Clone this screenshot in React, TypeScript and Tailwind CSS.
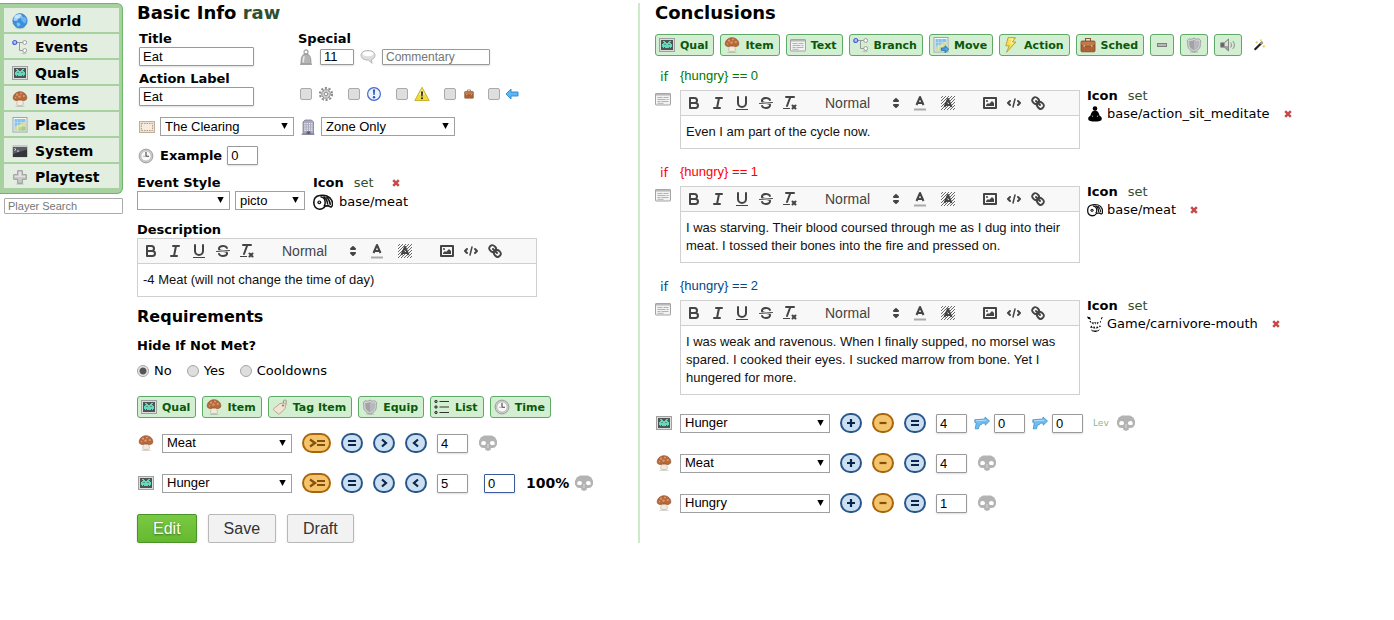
import React, { useId } from 'react';

type Kids = { children?: React.ReactNode };

const Svg = ({ children }: Kids) => (
  <svg className="size-4 shrink-0" viewBox="0 0 16 16" aria-hidden="true">{children}</svg>
);

/* ---------- pictograms ---------- */

const World = () => (
  <Svg>
    <ellipse cx="8" cy="14.8" rx="5" ry="1" fill="#000" opacity=".15" />
    <circle cx="8" cy="7.8" r="7.2" fill="#3d8fdc" stroke="#2f74c0" strokeWidth=".6" />
    <path d="M2 4.5C4 1.5 7 .8 9 1.2c1 .6-.6 1.6-1.2 2.6S6 5.6 5.600 7 3.500 7.500 2.600 8 1.200 6 2 4.500z" fill="#9fd4fa" />
    <path d="M10 4.200c2-.6 3.800-.2 4.400 1.600.5 2-.4 3.500-1.600 4.500-1.300.2-1.500-1.500-2.800-2.200-1.200-1-.9-3 0-3.900z" fill="#6db5f0" />
    <path d="M5 9.500c1.500-.3 3 .6 3.400 2-.3 1.300-1.500 2-2.400 1.900C4.800 12.500 4.300 11 5 9.500z" fill="#7fc3f5" />
    <ellipse cx="6.500" cy="3.600" rx="4" ry="2" fill="#fff" opacity=".45" />
  </Svg>
);
const Tree = () => (
  <Svg>
    <path d="M5 3.500h6M7.500 3.500v8h3.500" fill="none" stroke="#9a9a9a" />
    <circle cx="2.800" cy="3.500" r="2" fill="#b4c2ff" stroke="#4a5fd8" strokeWidth="1.200" />
    <circle cx="12.700" cy="3.500" r="1.900" fill="#fff" stroke="#999" />
    <circle cx="12.700" cy="11.500" r="1.900" fill="#fff" stroke="#999" />
    <ellipse cx="12" cy="14.500" rx="3" ry=".7" fill="#000" opacity=".15" />
  </Svg>
);
const Invader = () => (
  <Svg>
    <rect x=".5" y="1.500" width="15" height="13" fill="#dcdcdc" stroke="#a0a0a0" />
    <rect x="2" y="3" width="12" height="10" fill="#4c5656" />
    <path
      fill="#62dcb8"
      fillRule="evenodd"
      d="M4 4h2v1h1v1h2V5h1V4h2v1h-1v1h1v1h1v3h-1v1h-1v-1h-1v1H6v-1H5v1H4v-1H3V7h1V6h1V5H4zM5.500 7v1h1V7zM9.500 7v1h1V7z"
    />
  </Svg>
);
const Mushroom = () => (
  <Svg>
    <ellipse cx="8" cy="15.200" rx="5" ry=".7" fill="#000" opacity=".16" />
    <path d="M5 8h6c-.3 2 .1 3.800.5 5.300-.6 1.800-6.400 1.900-7 0 .6-1.500.8-3.300.5-5.300z" fill="#f4eadb" stroke="#bfa98e" strokeWidth=".6" />
    <path d="M1.200 6.800C1.500 3 4.500.8 8 .8s6.600 2.200 6.800 6c0 2-1.800 2.900-3.300 2.700-2-.6-5-.6-7 0-1.500.2-3.300-.7-3.300-2.700z" fill="#b9683a" stroke="#8d4c26" strokeWidth=".7" />
    <g fill="#dc9c72"><circle cx="5" cy="3.700" r="1.100" /><circle cx="9" cy="2.500" r="1" /><circle cx="11.800" cy="5" r="1.100" /><circle cx="7.500" cy="5.600" r="1.200" /><circle cx="3.500" cy="6.800" r=".8" /></g>
  </Svg>
);
const MapBase = () => (
  <>
    <rect x="1" y=".5" width="14" height="14.500" fill="#f5f8fa" stroke="#9aa5ad" />
    <rect x="2.500" y="2" width="11" height="11.500" fill="#83c2ee" />
    <path d="M2.500 13.500v-3c2-.5 3-3 5-3 1.500 0 2.500-2.500 4.500-2.500h1.500v8.500z" fill="#d5dc95" />
    <path d="M7 13.500c0-2.500 1.500-4 3.500-4h3v4z" fill="#a5cf85" />
    <path d="M5.500 2v11.500M9 2v11.500M2.500 5.500h11M2.500 9h11" stroke="#fff" strokeWidth=".5" opacity=".6" />
  </>
);
const Places = () => <Svg><MapBase /></Svg>;
const Move = () => (
  <Svg><MapBase /><path d="M8.500 11h3.500V8.700l3.700 3.500L12 15.700v-2.300H8.500z" fill="#4aa6ec" stroke="#1d69b4" strokeWidth=".8" /></Svg>
);
const Terminal = () => (
  <Svg>
    <rect x=".4" y="2" width="15.200" height="12.500" rx=".5" fill="#c9c9c9" />
    <rect x=".9" y="4" width="14.200" height="10" fill="#34343a" />
    <path d="M1 4h14v2.500L1 11z" fill="#5c5c64" />
    <path d="M2.500 5.500l1.500 1-1.500 1M5 8h2" fill="none" stroke="#fff" strokeWidth=".8" />
  </Svg>
);
const Plus = () => (
  <Svg>
    <ellipse cx="8" cy="15" rx="4.500" ry=".7" fill="#000" opacity=".15" />
    <path d="M5.700 1.700h4.600v4h4v4.600h-4v4H5.700v-4h-4V5.700h4z" fill="#c9c9c9" stroke="#929292" strokeWidth=".9" />
    <path d="M6.700 2.700h2.600v4h4v1.300H2.700V6.700h4z" fill="#e2e2e2" />
  </Svg>
);
const Weight = () => (
  <Svg>
    <circle cx="8" cy="3" r="2" fill="none" stroke="#a8a8a8" strokeWidth="1.300" />
    <path d="M3 15c0-4 .3-7 1.700-8.700C6 4.700 10 4.700 11.300 6.300 12.700 8 13 11 13 15z" fill="#b5b5b7" stroke="#8b8b8d" strokeWidth=".8" />
    <path d="M5.300 13.500c0-3 .2-5 1-6.200" stroke="#e8e8e8" fill="none" strokeWidth="1.500" />
    <path d="M2 15.300h12" stroke="#999" />
  </Svg>
);
const Bubble = () => (
  <Svg>
    <path d="M8 1.500c4 0 7 1.800 7 4.700 0 2.400-1.600 3.800-3.700 4.500l.9 3.600-3.900-3.200C4 11.100 1 9.300 1 6.200 1 3.300 4 1.500 8 1.500z" fill="#dededf" stroke="#aaa" strokeWidth=".8" />
    <ellipse cx="8" cy="4.800" rx="5.300" ry="2.400" fill="#fff" />
  </Svg>
);
const Gear = () => (
  <Svg>
    <circle cx="8" cy="8" r="6" fill="none" stroke="#8e8e8e" strokeWidth="2.200" strokeDasharray="2.100 1.670" />
    <circle cx="8" cy="8" r="4.400" fill="#d6d6d6" stroke="#919191" strokeWidth=".9" />
    <path d="M8 4v8M4 8h8M5.200 5.200l5.600 5.600M10.800 5.200l-5.600 5.600" stroke="#a5a5a5" strokeWidth=".6" />
    <circle cx="8" cy="8" r="1.600" fill="#fff" stroke="#888" strokeWidth=".8" />
  </Svg>
);
const Alert = () => (
  <Svg>
    <circle cx="8" cy="8" r="6.400" fill="#edf4ff" stroke="#4168cf" strokeWidth="1.200" />
    <path d="M6.900 3.500h2.200L8.600 9H7.400z" fill="#2c53bd" /><circle cx="8" cy="11.200" r="1.200" fill="#2c53bd" />
  </Svg>
);
const Warn = () => (
  <Svg>
    <path d="M8 1.300l7.200 13.200H.8z" fill="#f0db3d" stroke="#c3ac22" strokeWidth=".9" strokeLinejoin="round" />
    <path d="M8 3l3 5.500C9 9.500 7 9.500 5 8.500z" fill="#f9ef8e" />
    <path d="M7 5.500h2l-.4 5H7.400z" fill="#222" /><circle cx="8" cy="12.300" r="1" fill="#222" />
  </Svg>
);
const Case = ({ small = false }: { small?: boolean }) => (
  <svg className={small ? 'size-2.5 shrink-0' : 'size-4 shrink-0'} viewBox="0 0 16 16" aria-hidden="true">
    <path d="M5.500 4V1.500h5V4" fill="none" stroke="#8d5a36" strokeWidth="1.100" />
    <rect x="1" y="4" width="14" height="10.800" rx="1" fill="#ad6335" stroke="#7d4522" strokeWidth=".8" />
    <path d="M1.500 4.800h13v3.200c-4 1.500-9 1.500-13 0z" fill="#c07a4c" />
    <path d="M1.500 8.300c4 1.500 9 1.500 13 0" fill="none" stroke="#7d4522" strokeWidth=".6" />
    <rect x="3.500" y="8" width="1.500" height="1.800" fill="#ddb377" /><rect x="11" y="8" width="1.500" height="1.800" fill="#ddb377" />
  </svg>
);
const LeftArrow = () => (
  <Svg><path d="M2 8l5-5v3h7v4H7v3z" fill="#5cb8f2" stroke="#2a84cf" strokeWidth=".9" strokeLinejoin="round" /></Svg>
);
const Ticket = () => (
  <Svg>
    <rect x=".5" y="2.500" width="15" height="11" fill="#efe2d0" stroke="#bfae99" />
    <rect x="2.500" y="4.500" width="11" height="7" fill="#f5ecdf" stroke="#a8967f" strokeWidth=".9" strokeDasharray="1.500 1" />
  </Svg>
);
const Building = () => (
  <Svg>
    <path d="M3 3l2-2h6.500l2 2v12H3z" fill="#a9a9bd" stroke="#7f7f93" strokeWidth=".8" />
    <path d="M4.900 4v8M7.200 4v8M9.500 4v8M11.800 4v8" stroke="#eeeefa" strokeWidth="1.200" strokeDasharray="1.300 .9" />
    <path d="M1.500 15.300h13M7 15v-2.500h3V15" stroke="#77778b" fill="#54546a" />
  </Svg>
);
const Clock = () => (
  <Svg>
    <circle cx="8" cy="8" r="6.900" fill="#d2d2d2" stroke="#959595" strokeWidth=".9" />
    <circle cx="8" cy="8" r="5.100" fill="#fafafa" stroke="#aaa" strokeWidth=".7" />
    <path d="M8 4v4.300h3" fill="none" stroke="#444" strokeWidth="1.100" />
    <path d="M5 8.300h2" stroke="#999" strokeWidth=".7" />
  </Svg>
);
const Meat = ({ large = false }: { large?: boolean }) => (
  <svg className={large ? 'size-5 shrink-0' : 'size-4 shrink-0'} viewBox="0 0 20 20" aria-hidden="true">
    <path d="M.8 10.500c0-4 2.200-6.500 5.700-7 5-1 10.500.5 12.300 5 .9 2.500.7 5.500-.3 6.200-1.200.6-2.200-.2-3.200-1l-3.200.4c-1.200 2-3.300 3.100-5.600 3.100C3 17.200.8 14.500.8 10.500z" fill="#fff" stroke="#111" strokeWidth="1.600" />
    <path d="M7.500 4.800c3.200.4 4.800 3 4.700 6-.1 1.500-.6 2.500-1.200 3.200" fill="none" stroke="#111" strokeWidth="1.500" />
    <circle cx="6.300" cy="10.300" r="1.900" fill="#111" /><circle cx="6.300" cy="10.300" r=".7" fill="#fff" />
    <path d="M10.500 4.500c2.700 1.500 3.900 4.500 4.200 8M13.500 4.800c2 1.800 3.400 4.500 3.900 8" fill="none" stroke="#111" strokeWidth="1.500" />
  </svg>
);
const Tag = () => (
  <Svg>
    <path d="M11.500 4.500C10.500 1.500 13 0 14 1.500s-1 3 .8 4" fill="none" stroke="#9a8574" strokeWidth="1" />
    <path d="M8 4.500l4.200-.4 1.300 1.200-.3 4.200-5.700 5.300c-.6.500-1 .4-1.500 0L1.700 11c-.5-.5-.4-1 0-1.400z" fill="#f1e4d5" stroke="#b59f8a" strokeWidth=".9" />
    <circle cx="11" cy="6.500" r="1.100" fill="#b8714f" />
  </Svg>
);
const Shield = () => (
  <Svg>
    <ellipse cx="8" cy="15" rx="4.500" ry=".7" fill="#000" opacity=".18" />
    <path d="M8 1c1.500 1 3.200 1.600 4.800.6l2 2.200c-1 1.500-.2 3-.5 5-.4 3-3 5-6.300 6.200C4.700 13.800 2.100 11.800 1.700 8.800c-.3-2 .5-3.500-.5-5l2-2.200C4.800 2.600 6.500 2 8 1z" fill="#d2d2d4" stroke="#939396" strokeWidth=".8" />
    <path d="M8 3c1.500.9 3 1.200 4.300.7l.6.8c-.5 1.500 0 2.500-.3 4.100-.3 2-2.100 3.700-4.600 4.700-2.500-1-4.300-2.700-4.600-4.700-.3-1.600.2-2.600-.3-4.100l.6-.8C5 4.200 6.500 3.900 8 3z" fill="#a2a3a7" />
    <path d="M8 3c1.500.9 3 1.200 4.300.7l.6.8c-.5 1.500 0 2.500-.3 4.100-.3 2-2.100 3.700-4.600 4.700z" fill="#b7b8bc" />
  </Svg>
);
const List = () => (
  <Svg>
    <path d="M5.500 2.500H15M5.500 8H15M5.500 13.500H15" stroke="#333" strokeWidth="1.100" />
    <g fill="#999" stroke="#222" strokeWidth=".9"><circle cx="2" cy="2.500" r="1.200" /><circle cx="2" cy="8" r="1.200" /><circle cx="2" cy="13.500" r="1.200" /></g>
  </Svg>
);
const TextDoc = () => (
  <Svg>
    <rect x=".5" y="2.500" width="15" height="11.500" rx=".5" fill="#f2f2f2" stroke="#a3a3a3" />
    <path d="M1 3.700h14" stroke="#b9b9b9" strokeWidth="1.700" />
    <path d="M2.500 6.500h5M8.500 6.500h5M2.500 8.500h8M11.500 8.500h2M2.500 10.500h3M6.500 10.500h7M2.500 12.300h6" stroke="#aaa" strokeWidth=".9" />
  </Svg>
);
const Bolt = () => (
  <Svg><path d="M5 .7h7.500L9.500 5H13L3.500 15.300l2.800-6.500H2.800z" fill="#f5df54" stroke="#ba9d28" strokeWidth=".9" strokeLinejoin="round" /><path d="M6 2h4L7.500 6H10" fill="none" stroke="#fff9b5" /></Svg>
);
const Minus = () => (
  <Svg><rect x="3.500" y="6.500" width="9" height="3" fill="#b7b7b7" stroke="#808080" /></Svg>
);
const Sound = () => (
  <Svg>
    <path d="M.8 5.800h3.500L8.500 2v12l-4.200-3.800H.8z" fill="#a2a2a2" stroke="#777" strokeWidth=".8" />
    <path d="M.8 6.200h3.500v3.600H.8z" fill="#666" />
    <path d="M4.800 6L8 3.200V9H4.800z" fill="#ddd" />
    <path d="M10.500 5.500c1.200 1.500 1.200 3.500 0 5M12.800 4c2 2.400 2 5.600 0 8" fill="none" stroke="#999" strokeWidth="1.100" />
  </Svg>
);
const Wand = () => (
  <svg className="size-3.5 shrink-0" viewBox="0 0 16 16" aria-hidden="true">
    <path d="M3 13.500l9-9" stroke="#222" strokeWidth="2.500" /><path d="M9.800 6.700l2.300-2.300" stroke="#aaa" strokeWidth="2" />
    <path d="M5.500 3.500v3M4 5h3M12 9.500h3M13.500 8v3M9 2.500h2M10 1.500v2" stroke="#e8c84b" strokeWidth="1" />
  </svg>
);
const Meditate = () => (
  <Svg><circle cx="8" cy="2.600" r="2.300" /><path d="M6.500 5h3c2 .3 2.200 2.500 3.300 5 1.500.6 2.300 1.500 1.900 3.500-.3 1.400-3 2-6.700 2s-6.400-.6-6.700-2c-.4-2 .4-2.900 1.900-3.500C4.300 7.500 4.500 5.300 6.500 5z" /><path d="M5.200 9.500l.6 1.500M10.800 9.500l-.6 1.500" stroke="#fff" strokeWidth=".6" /></Svg>
);
const Mouth = () => (
  <Svg>
    <path d="M0 .5l3 .8 1 2.400-3-1zM15.800 1.200l-1.300 2.300-.7-.6 1-1.900zM2.300 5.500l1.500-.8.400 2.200zM12.800 5l1.500.6-1.100 1.500zM4.500 6.500l2.200-.3-.4 2.500zM7.200 6.300l1.800-.1-.6 2.300zM9.600 6.200l2.100.1-1 2.300zM3 11.500l1.500-2 1.300 2.500zM6 12.300l1-2.400 1.500 2.600zM9 12.500l1-2.600 1.500 2.200zM12 11.300l.7-2 1.500 1.300zM4 13.300l1.700 1.200h5l2.300-1.500-1.500 2-3 .9-3.500-.7z" />
  </Svg>
);
const Gun = () => (
  <Svg><path d="M.8 4.800L11 4V2l4.500 4-4.300 4.200V8L8 8.300 7.200 9.800H5.500l-1 4H1.200L2.300 8 .8 7.300z" fill="#6fbdf1" stroke="#3a8fd0" strokeWidth=".8" strokeLinejoin="round" /><path d="M2 5.800l10-.6" stroke="#b5e0fb" /></Svg>
);
const Mask = () => (
  <svg className="h-4 w-[18px]" viewBox="0 0 18 16" aria-hidden="true">
    <path d="M5 .5h8l3.300 2L18 6v3.500l-2 3-2.500.5h-1.700v1.800L9 16l-2.800-1.200V13H4.500L2 12.500l-2-3V6l1.700-3.500z" fill="#b3b3b3" />
    <path d="M4.500 6C2.600 6.200 2 7.500 2.300 9.500c1.700 1 4.400.7 4.700-1C7.200 6.800 6 5.900 4.500 6zM13.500 6c1.900.2 2.500 1.500 2.200 3.500-1.700 1-4.400.7-4.700-1C10.800 6.800 12 5.900 13.500 6z" fill="#fff" />
    <path d="M9 9v4" stroke="#e5e5e5" strokeWidth=".8" />
  </svg>
);
const RedX = () => (
  <svg className="size-2" viewBox="0 0 8 8" aria-hidden="true"><path d="M1.200 1.200l5.600 5.600M6.800 1.200L1.200 6.800" stroke="#c8494c" strokeWidth="2.500" /></svg>
);

/* ---------- form parts ---------- */

const sans = "font-['Liberation_Sans',Arial,sans-serif]";
const plainField = "rounded-[1px] border bg-white pl-[3px] text-black shadow-[0_1px_2px_#ddd] font-['Liberation_Sans',Arial,sans-serif]";
const field = `${plainField} border-[#999] text-[13px]`;
const caption = 'pt-0.5 leading-4 font-bold';

const Num = ({ value, label, blue = false }: { value: string; label: string; blue?: boolean }) => (
  <input aria-label={label} defaultValue={value} className={`${plainField} h-[19px] w-[31px] text-[13px] ${blue ? 'border-[#3b5a9a]' : 'border-[#999]'}`} />
);

const Select = ({ value, label, width }: { value: string; label: string; width: string }) => (
  <span className={`relative inline-flex h-[19px] ${width}`}>
    <select aria-label={label} defaultValue={value} className={`h-full w-full appearance-none border border-[#a0a0a0] bg-white pl-1 text-[13px] leading-4 text-black ${sans}`}>
      <option>{value}</option>
    </select>
    <svg className="pointer-events-none absolute top-1.5 right-1.5 h-1.5 w-[7px]" viewBox="0 0 7 6" aria-hidden="true"><path d="M.3 0h6.400L3.500 6z" /></svg>
  </span>
);

const Chip = ({ icon, text, label }: { icon: React.ReactNode; text?: string; label?: string }) => (
  <button aria-label={label} className={`flex h-[22px] items-center gap-[5px] rounded-[3px] border border-[#5fa866] bg-[#d3efd1] text-[11px] font-bold text-[#0a580a] ${text ? 'pr-[5px] pl-[3px]' : 'px-[5px]'}`}>
    {icon}{text && <span className="pt-px">{text}</span>}
  </button>
);

const Op = ({ kind, on = false }: { kind: string; on?: boolean }) => {
  const paths: Record<string, string> = {
    '+': 'M3 7h8M7 3v8',
    '−': 'M3.500 7h7',
    '=': 'M3 5h8M3 9h8',
    '>': 'M5 3.500L9 7l-4 3.500',
    '<': 'M9 3.500L5 7l4 3.500',
  };
  return (
    <button aria-label={kind} className={`flex h-5 items-center justify-center rounded-full border-2 ${kind === '>=' ? 'w-[29px]' : 'w-[22px]'} ${on ? 'border-[#a9650b] bg-[#f3c46c] text-[#82500a]' : 'border-[#29568a] bg-[#cbdff1] text-[#08264d]'}`}>
      {kind === '>=' ? (
        <svg className="h-3.5 w-[18px] shrink-0" viewBox="0 0 18 14" aria-hidden="true"><path d="M2 3.500L7 7l-5 3.500M9 5h8M9 9h8" fill="none" stroke="currentColor" strokeWidth="2.200" /></svg>
      ) : (
        <svg className="size-3.5 shrink-0" viewBox="0 0 14 14" aria-hidden="true"><path d={paths[kind]} fill="none" stroke="currentColor" strokeWidth="2.200" /></svg>
      )}
    </button>
  );
};

/* ---------- rich text editor ---------- */

const Tool = ({ label, children }: Kids & { label: string }) => (
  <button aria-label={label} className="flex h-6 w-6 items-center justify-center">
    <svg className="size-[18px]" viewBox="0 0 18 18" fill="none" stroke="#444" strokeWidth="2" strokeLinecap="round" strokeLinejoin="round" aria-hidden="true">{children}</svg>
  </button>
);

const Editor = ({ children }: Kids) => {
  const hatch = useId();
  return (
    <div className="w-[400px] border border-[#d0d0d0] bg-white">
      <div className="flex h-[25px] items-center border-b border-[#d0d0d0] bg-[#f8f8f8] pl-px">
        <Tool label="Bold"><path d="M5 4h4.500a2.500 2.500 0 0 1 0 5H5zM5 9h5.500a2.500 2.500 0 0 1 0 5H5z" /></Tool>
        <Tool label="Italic"><path d="M7 4h6M5 14h6M8 14l2-10" /></Tool>
        <Tool label="Underline"><path d="M5 3v6a4 4 0 0 0 8 0V3" /><rect x="3" y="15" width="12" height="1" fill="#444" stroke="none" /></Tool>
        <Tool label="Strike">
          <path d="M15.500 8.500l-13 1" strokeWidth="1" />
          <g fill="#444" stroke="none">
            <path d="M9.007 8C6.542 7.791 6 7.519 6 6.500 6 5.792 7.283 5 9 5c1.571 0 2.765.679 2.969 1.309a1 1 0 0 0 1.900-.617C13.356 4.106 11.354 3 9 3 6.200 3 4 4.538 4 6.500a3.200 3.200 0 0 0 .5 1.843z" />
            <path d="M8.984 10C11.457 10.208 12 10.479 12 11.500c0 .708-1.283 1.500-3 1.500-1.571 0-2.765-.679-2.969-1.309a1 1 0 1 0-1.900.617C4.644 13.894 6.646 15 9 15c2.800 0 5-1.538 5-3.500a3.200 3.200 0 0 0-.5-1.843z" />
          </g>
        </Tool>
        <Tool label="Clear formatting"><path d="M5 3h8M6 12l3.350-9M11.500 11.500l3 3M14.500 11.500l-3 3" /><rect x="2" y="14" width="7" height="1" fill="#444" stroke="none" /></Tool>
        <span className="relative ml-[23px] flex h-6 w-[83px] items-center">
          <select aria-label="Text style" className={`h-full w-full appearance-none bg-transparent text-sm text-[#444] ${sans}`}><option>Normal</option></select>
          <svg className="pointer-events-none absolute top-[3px] right-[3px] size-[18px]" viewBox="0 0 18 18" fill="#444" stroke="#444" strokeWidth="2" strokeLinejoin="round" aria-hidden="true"><path d="M7 11l2 2 2-2zM7 7l2-2 2 2z" /></svg>
        </span>
        <Tool label="Text colour"><path d="M3 15.500h12" stroke="#aaa" strokeLinecap="butt" /><path d="M5.500 11L9 3l3.500 8M6.380 9h5.250" strokeLinecap="butt" /></Tool>
        <span className="w-1" />
        <Tool label="Background colour">
          <defs><pattern id={hatch} width="3" height="3" patternUnits="userSpaceOnUse"><path d="M-1 1l2-2M0 3l3-3M2 4l2-2" stroke="#444" strokeWidth=".8" /></pattern></defs>
          <rect x="2" y="2" width="14" height="14" fill={`url(#${hatch})`} stroke="none" />
          <path d="M5.500 13L9 5l3.500 8M6.380 11h5.250" strokeLinecap="butt" />
        </Tool>
        <span className="w-[18px]" />
        <Tool label="Image"><rect x="3" y="4" width="12" height="10" /><circle cx="6" cy="7" r="1" fill="#444" stroke="none" /><path d="M5 12v-1l2-2 1 1 3-3 2 2v3z" fill="#444" stroke="none" /></Tool>
        <Tool label="Code"><path d="M5 7L3 9l2 2M13 7l2 2-2 2" /><path d="M10 5L8 13" strokeWidth="1.500" /></Tool>
        <Tool label="Link"><path d="M7 7l4 4M8.900 4.577a3.476 3.476 0 0 1 .36 4.679A3.476 3.476 0 0 1 4.577 8.900C3.185 7.500 2.035 6.400 4.217 4.217S7.500 3.185 8.900 4.577zM13.423 9.100a3.476 3.476 0 0 0-4.679-.36 3.476 3.476 0 0 0 .36 4.679c1.392 1.392 2.500 2.542 4.679.36s1.032-3.279-.36-4.679z" /></Tool>
      </div>
      <div className={`px-[5px] py-[7px] text-[13px] leading-[18px] text-[#111] ${sans}`}>{children}</div>
    </div>
  );
};

const IconInfo = ({ icon, name }: { icon: React.ReactNode; name: string }) => (
  <div className="-mt-[3px] flex flex-col text-[13px] leading-[18px]">
    <p><b>Icon</b><a href="#set" className="ml-2.5 text-[#2f4f2f]">set</a></p>
    <p className="flex items-center gap-1">{icon}<span>{name}</span><button aria-label="Remove icon" className="ml-2.5"><RedX /></button></p>
  </div>
);

const Conclusion = ({ cond, color, icon, name, children }: Kids & { cond: string; color: string; icon: React.ReactNode; name: string }) => (
  <article className="mb-3.5">
    <p className={`mb-1 flex pl-[5px] text-[13px] leading-[18px] ${color}`}><span className="w-5 pt-px">if</span><span className={sans}>{cond}</span></p>
    <div className="flex items-start">
      <span className="mt-px mr-[9px]"><TextDoc /></span>
      <Editor>{children}</Editor>
      <div className="ml-[7px]"><IconInfo icon={icon} name={name} /></div>
    </div>
  </article>
);

const EffectRow = ({ icon, name, value, children }: Kids & { icon: React.ReactNode; name: string; value: string }) => (
  <div className="flex h-5 items-center">
    {icon}<span className="ml-2 flex"><Select value={name} label="Effect target" width="w-[150px]" /></span>
    <div className="mx-2.5 flex gap-2.5"><Op kind="+" /><Op kind="−" on /><Op kind="=" /></div>
    <Num value={value} label={`${name} amount`} />
    {children}
    <button aria-label="Remove" className={children ? 'ml-2 flex' : 'ml-[11px] flex'}><Mask /></button>
  </div>
);

const nav: [string, React.ReactNode][] = [
  ['World', <World />], ['Events', <Tree />], ['Quals', <Invader />], ['Items', <Mushroom />],
  ['Places', <Places />], ['System', <Terminal />], ['Playtest', <Plus />],
];

const flags: [string, React.ReactNode][] = [
  ['Automatic', <Gear />], ['Important', <Alert />], ['Warning', <Warn />],
];

const checkbox = 'size-3 appearance-none rounded-[2px] border border-[#aaa] bg-[#dedede]';
const grayButton = 'h-[29px] rounded-[2px] border border-[#b8b8b8] bg-[#f2f2f2] px-[15px] leading-6 text-[#333] shadow-[0_1px_2px_#ddd]';

export default function App() {
  return (
    <div className="flex items-start bg-white pt-[3px] font-['DejaVu_Sans',Verdana,sans-serif] text-[13px] leading-[18px] text-black">
      <aside className="mr-3.5 w-[123px] shrink-0">
        <nav className="flex flex-col gap-0.5 rounded-r-md border border-l-0 border-[#6cb56a] bg-[#a8d1a0] pt-1 pr-[3px] pb-[5px] pl-1">
          {nav.map(([name, icon]) => (
            <a key={name} href={`#${name}`} className="flex h-6 items-center gap-[7px] bg-[#e2efe0] pt-px pl-2 text-sm font-bold">{icon}<span className="pt-px">{name}</span></a>
          ))}
        </nav>
        <input aria-label="Player Search" placeholder="Player Search" className={`mt-1 ml-1 h-4 w-[119px] rounded-[1px] border border-[#aaa] pl-[3px] text-[11px] placeholder:text-[#757575] ${sans}`} />
      </aside>

      <div className="flex min-w-0 grow">
        <section className="w-[501px] shrink-0">
          <h2 className="text-lg leading-5 font-bold">Basic Info <a href="#raw" className="text-[#2f4f2f]">raw</a></h2>

          <div className="mt-1.5 flex pl-0.5">
            <div className="flex w-[159px] flex-col">
              <label htmlFor="title" className={caption}>Title</label>
              <input id="title" defaultValue="Eat" className={`${field} h-[19px] w-[115px]`} />
              <label htmlFor="action" className={`mt-[3px] ${caption}`}>Action Label</label>
              <input id="action" defaultValue="Eat" className={`${field} h-[19px] w-[115px]`} />
            </div>
            <div className="flex flex-col">
              <span className={caption}>Special</span>
              <div className="mt-0.5 flex h-4 items-center">
                <Weight />
                <input aria-label="Weight" defaultValue="11" className={`${field} ml-1.5 h-4 w-[34px]`} />
                <span className="mx-1.5"><Bubble /></span>
                <input aria-label="Commentary" placeholder="Commentary" className={`${plainField} h-4 w-[108px] border-[#999] text-xs placeholder:text-[#757575]`} />
              </div>
              <div className="mt-[21px] flex h-4 items-center pl-0.5">
                {flags.map(([name, icon]) => (
                  <label key={name} className="flex w-12 items-center gap-1.5"><input type="checkbox" aria-label={name} className={checkbox} />{icon}</label>
                ))}
                <label className="flex w-11 items-center gap-2"><input type="checkbox" aria-label="Scheduled" className={checkbox} /><Case small /></label>
                <label className="flex items-center gap-1"><input type="checkbox" aria-label="Return" className={checkbox} /><LeftArrow /></label>
              </div>
            </div>
          </div>

          <div className="mt-[11px] flex items-center pl-0.5">
            <Ticket /><span className="mr-1.5 ml-[5px] flex"><Select value="The Clearing" label="Place" width="w-[134px]" /></span>
            <Building /><span className="ml-[5px] flex"><Select value="Zone Only" label="Scope" width="w-[134px]" /></span>
          </div>

          <div className="mt-2.5 flex items-center pl-px">
            <Clock /><label htmlFor="example" className="mr-[5px] ml-1.5 font-bold">Example</label>
            <input id="example" defaultValue="0" className={`${field} h-[19px] w-[31px]`} />
          </div>

          <div className="mt-2 flex">
            <div className="w-[176px]">
              <p className={caption}>Event Style</p>
              <div className="flex gap-[5px]"><Select value="" label="Event Style" width="w-[93px]" /><Select value="picto" label="Icon style" width="w-[70px]" /></div>
            </div>
            <div>
              <p className="flex items-center pt-0.5 leading-4"><b>Icon</b><a href="#set" className="mr-[18px] ml-2.5 text-[#2f4f2f]">set</a><button aria-label="Remove icon"><RedX /></button></p>
              <p className="flex h-[21px] items-center gap-1.5"><Meat large />base/meat</p>
            </div>
          </div>

          <p className={`mt-2 ${caption}`}>Description</p>
          <Editor>-4 Meat (will not change the time of day)</Editor>

          <h3 className="mt-2 text-base leading-6 font-bold">Requirements</h3>
          <fieldset className="mt-2">
            <legend className="font-bold">Hide If Not Met?</legend>
            <div className="mt-[7px] flex gap-[15px]">
              {['No', 'Yes', 'Cooldowns'].map((name) => (
                <label key={name} className="flex items-center gap-[5px]">
                  <input type="radio" name="hide" defaultChecked={name === 'No'} className="size-3 appearance-none rounded-full border border-[#a5a5a5] bg-[#dedede] checked:bg-[radial-gradient(circle,#555_3px,#e8e8e8_4px)]" />{name}
                </label>
              ))}
            </div>
          </fieldset>

          <div className="mt-4 flex gap-1.5">
            <Chip icon={<Invader />} text="Qual" /><Chip icon={<Mushroom />} text="Item" /><Chip icon={<Tag />} text="Tag Item" />
            <Chip icon={<Shield />} text="Equip" /><Chip icon={<List />} text="List" /><Chip icon={<Clock />} text="Time" />
          </div>

          <div className="mt-[15px] flex flex-col gap-5">
            {['Meat', 'Hunger'].map((name) => (
              <div key={name} className="flex h-5 items-center pl-px">
                {name === 'Meat' ? <Mushroom /> : <Invader />}
                <span className="mr-2.5 ml-2 flex"><Select value={name} label="Requirement" width="w-[130px]" /></span>
                <div className="mr-2.5 flex gap-2.5"><Op kind=">=" on /><Op kind="=" /><Op kind=">" /><Op kind="<" /></div>
                <Num value={name === 'Meat' ? '4' : '5'} label={`${name} amount`} />
                {name === 'Hunger' && <><span className="mr-[11px] ml-4 flex"><Num value="0" label="Maximum" blue /></span><b className="text-sm">100%</b></>}
                <button aria-label="Remove" className={name === 'Meat' ? 'ml-[11px] flex' : 'ml-1.5 flex'}><Mask /></button>
              </div>
            ))}
          </div>

          <div className={`mt-[21px] flex gap-[11px] text-base ${sans}`}>
            <button className="h-[29px] rounded-[2px] border border-[#4a9427] bg-linear-to-b from-[#7ac943] to-[#65b92f] px-[15px] leading-6 text-white shadow-[0_1px_2px_#ccc] [text-shadow:0_1px_2px_#3a7020]">Edit</button>
            <button className={grayButton}>Save</button>
            <button className={grayButton}>Draft</button>
          </div>
        </section>

        <section className="min-w-0 grow border-l-2 border-[#cdebc8] pl-[15px]">
          <h2 className="text-lg leading-5 font-bold">Conclusions</h2>
          <div className="mt-[11px] mb-[11px] flex items-center gap-1.5">
            <Chip icon={<Invader />} text="Qual" /><Chip icon={<Mushroom />} text="Item" /><Chip icon={<TextDoc />} text="Text" />
            <Chip icon={<Tree />} text="Branch" /><Chip icon={<Move />} text="Move" /><Chip icon={<Bolt />} text="Action" />
            <Chip icon={<Case />} text="Sched" /><Chip icon={<span className="-mx-0.5"><Minus /></span>} label="Separator" />
            <Chip icon={<Shield />} label="Shield" /><Chip icon={<Sound />} label="Sound" />
            <button aria-label="Wizard" className="ml-1"><Wand /></button>
          </div>
          <Conclusion cond="{hungry} == 0" color="text-[#007a00]" icon={<Meditate />} name="base/action_sit_meditate">Even I am part of the cycle now.</Conclusion>
          <Conclusion cond="{hungry} == 1" color="text-[#f00]" icon={<Meat />} name="base/meat">I was starving. Their blood coursed through me as I dug into their meat. I tossed their bones into the fire and pressed on.</Conclusion>
          <Conclusion cond="{hungry} == 2" color="text-[#004a8c]" icon={<Mouth />} name="Game/carnivore-mouth">I was weak and ravenous. When I finally supped, no morsel was spared. I cooked their eyes. I sucked marrow from bone. Yet I hungered for more.</Conclusion>
          <div className="mt-[18px] flex flex-col gap-5 pl-px">
            <EffectRow icon={<Invader />} name="Hunger" value="4">
              <span className="mr-1 ml-[7px]"><Gun /></span><Num value="0" label="Minimum shift" />
              <span className="mr-1 ml-[7px]"><Gun /></span><Num value="0" label="Maximum shift" />
              <button className="ml-2.5 text-[9px] text-[#82bd8f]">Lev</button>
            </EffectRow>
            <EffectRow icon={<Mushroom />} name="Meat" value="4" />
            <EffectRow icon={<Mushroom />} name="Hungry" value="1" />
          </div>
        </section>
      </div>
    </div>
  );
}
